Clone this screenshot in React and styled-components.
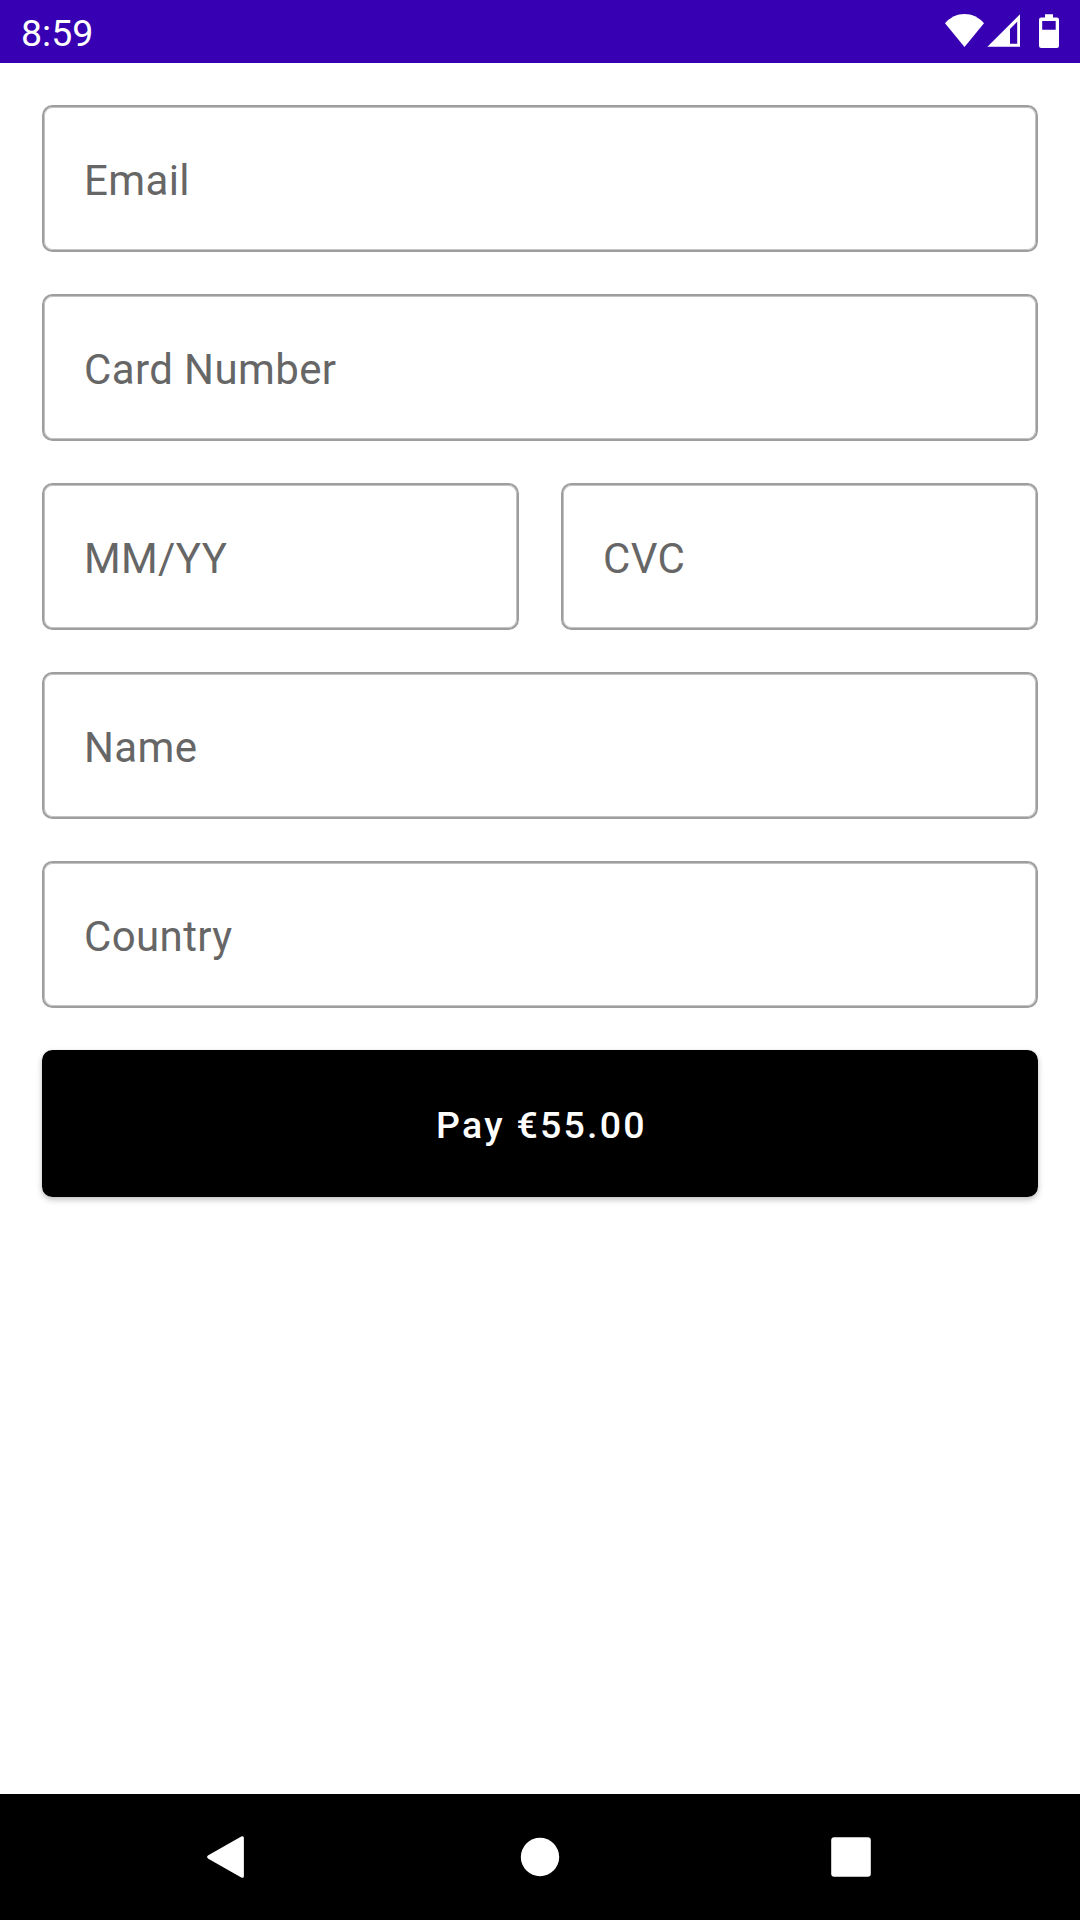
import React from "react";
import styled, { createGlobalStyle } from "styled-components";

const GlobalStyle = createGlobalStyle`
  * { box-sizing: border-box; }
  body { margin: 0; background: #fff; font-family: Roboto, sans-serif; }
`;

const Screen = styled.div`
  display: flex;
  flex-direction: column;
  width: 1080px;
  height: 1920px;
  background: #fff;
`;

const StatusBar = styled.header`
  display: flex;
  justify-content: space-between;
  height: 63px;
  padding: 0 21px;
  background: #3700b3;
  color: #fff;
`;

const Clock = styled.time`
  padding-top: 1px;
  font-size: 37.5px;
  line-height: 64px;
`;

const StatusIcons = styled.div`
  display: flex;
  align-items: flex-start;
  padding-top: 14px;
`;

const StatusIcon = styled.svg`
  display: block;
  fill: #fff;
  margin-left: ${(p) => p.$gap || 0}px;
`;

const Form = styled.main`
  flex: 1;
  display: flex;
  flex-direction: column;
  gap: 42px;
  padding: 42px;
`;

const FieldRow = styled.div`
  display: grid;
  grid-template-columns: 1fr 1fr;
  gap: 42px;
`;

const Field = styled.div`
  display: flex;
  align-items: center;
  height: 147px;
  padding: 4px 40px 0;
  border: 2px solid #9e9e9e;
  border-radius: 10.5px;
  box-shadow: inset 0 0 0 1px #c4c4c4;
`;

const FieldLabel = styled.span`
  color: #666;
  font-size: 42px;
  line-height: 49px;
  letter-spacing: 0.39px;
`;

const PayButton = styled.button`
  height: 147px;
  padding: 2px 0 0 3px;
  border: 0;
  border-radius: 10.5px;
  background: #000;
  color: #fff;
  font: 500 37.5px/44px Roboto, sans-serif;
  letter-spacing: 2.25px;
  box-shadow: 0 3px 6px rgba(0, 0, 0, 0.22), 0 1px 4px rgba(0, 0, 0, 0.06);
`;

const NavBar = styled.nav`
  display: flex;
  justify-content: space-between;
  align-items: center;
  height: 126px;
  padding: 0 176px;
  background: #000;
`;

const NavIcon = styled.svg`
  display: block;
  width: 105px;
  height: 105px;
  fill: #fff;
`;

export default function App() {
  return (
    <>
      <GlobalStyle />
      <Screen>
        <StatusBar>
          <Clock>8:59</Clock>
          <StatusIcons>
            <StatusIcon width="40" height="34" viewBox="0 0 40 34">
              <path d="M0 9.3C5.2 3.1 12.3 0 19.5 0S33.8 3.1 39 9.3L19.5 33Z" />
            </StatusIcon>
            <StatusIcon $gap={2} width="33" height="34" viewBox="0 0 33 34">
              <path fillRule="evenodd" d="M0.4 32.8L33 0.2V32.8ZM23 29.8H30.2V7.8L23 15Z" />
            </StatusIcon>
            <StatusIcon $gap={19} width="20" height="34" viewBox="0 0 20 34">
              <path
                fillRule="evenodd"
                d="M6 0.3H14V3.6H17.8Q20 3.6 20 5.8V31.8Q20 34 17.8 34H2.2Q0 34 0 31.8V5.8Q0 3.6 2.2 3.6H6ZM3.2 7V15.8H16.7V7Z"
              />
            </StatusIcon>
          </StatusIcons>
        </StatusBar>
        <Form>
          <Field><FieldLabel>Email</FieldLabel></Field>
          <Field><FieldLabel>Card Number</FieldLabel></Field>
          <FieldRow>
            <Field><FieldLabel>MM/YY</FieldLabel></Field>
            <Field><FieldLabel>CVC</FieldLabel></Field>
          </FieldRow>
          <Field><FieldLabel>Name</FieldLabel></Field>
          <Field><FieldLabel>Country</FieldLabel></Field>
          <PayButton type="button">Pay €55.00</PayButton>
        </Form>
        <NavBar>
          <NavIcon viewBox="0 0 105 105">
            <path d="M32.3 50.3L65.3 31.4Q67.9 30.4 67.9 33.1V70.9Q67.9 73.6 65.3 72.6L32.3 53.7Q29.8 52 32.3 50.3Z" />
          </NavIcon>
          <NavIcon viewBox="0 0 105 105">
            <circle cx="52" cy="52" r="19.2" />
          </NavIcon>
          <NavIcon viewBox="0 0 105 105">
            <rect x="32.2" y="32.2" width="39.6" height="39.6" rx="3" />
          </NavIcon>
        </NavBar>
      </Screen>
    </>
  );
}
